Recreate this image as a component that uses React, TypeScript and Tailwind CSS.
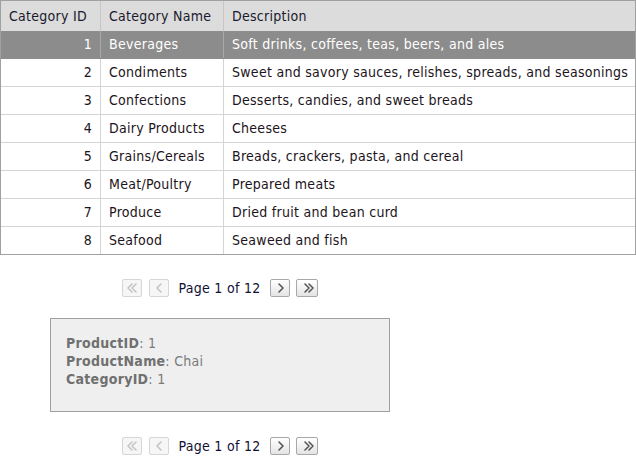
import React from "react";

const rows = [
  [1, "Beverages", "Soft drinks, coffees, teas, beers, and ales"],
  [2, "Condiments", "Sweet and savory sauces, relishes, spreads, and seasonings"],
  [3, "Confections", "Desserts, candies, and sweet breads"],
  [4, "Dairy Products", "Cheeses"],
  [5, "Grains/Cereals", "Breads, crackers, pasta, and cereal"],
  [6, "Meat/Poultry", "Prepared meats"],
  [7, "Produce", "Dried fruit and bean curd"],
  [8, "Seafood", "Seaweed and fish"],
] as const;

function PagerBtn({ kind, disabled }: { kind: "first" | "prev" | "next" | "last"; disabled?: boolean }) {
  const color = disabled ? "#c4c4c4" : "#555555";
  let d = "";
  if (kind === "first") d = "M9 5 L5 9 L9 13 M13 5 L9 9 L13 13";
  if (kind === "prev") d = "M11 5 L7 9 L11 13";
  if (kind === "next") d = "M8 5 L12 9 L8 13";
  if (kind === "last") d = "M7 5 L11 9 L7 13 M11 5 L15 9 L11 13";
  return (
    <div
      className={
        (kind === "last" ? "w-[22px] " : "w-[20px] ") +
        (disabled
          ? "h-[18px] rounded-[2px] border border-[#d6d6d6] bg-[#f6f6f6] flex items-center justify-center"
          : "h-[18px] rounded-[2px] border border-[#a8a8a8] bg-gradient-to-b from-[#ffffff] to-[#e4e4e4] flex items-center justify-center")
      }
    >
      <svg width="18" height="16" viewBox="0 1 18 16">
        <path d={d} fill="none" stroke={color} strokeWidth="1.6" strokeLinecap="round" strokeLinejoin="round" />
      </svg>
    </div>
  );
}

function Pager() {
  return (
    <div className="flex items-center justify-center h-[18px]">
      <div className="flex items-center">
        <PagerBtn kind="first" disabled />
        <div className="w-[7px]" />
        <PagerBtn kind="prev" disabled />
        <span className="mx-[10px] text-[14px] text-[#111133] leading-[18px]">Page 1 of 12</span>
        <PagerBtn kind="next" />
        <div className="w-[6px]" />
        <PagerBtn kind="last" />
      </div>
    </div>
  );
}

export default function App() {
  return (
    <div
      className="w-[636px] h-[456px] bg-white text-[14px] tracking-[0.28px]"
      style={{ fontFamily: '"DejaVu Sans Condensed", "DejaVu Sans", sans-serif' }}
    >
      <div className="border border-[#a0a0a0] w-[636px]">
        <div className="grid grid-cols-[100px_123px_1fr] h-[30px] bg-[#dcdcdc] text-[#1a1a2e]">
          <div className="px-2 flex items-center border-r border-[#c6c6c6]">Category ID</div>
          <div className="px-2 flex items-center border-r border-[#c6c6c6]">Category Name</div>
          <div className="px-2 flex items-center">Description</div>
        </div>
        {rows.map(([id, name, desc], i) => {
          const sel = i === 0;
          const last = i === rows.length - 1;
          return (
            <div
              key={id}
              className={
                "grid grid-cols-[100px_123px_1fr] " +
                (last ? "h-[27px] " : "h-[28px] border-b ") +
                (sel ? "bg-[#8c8c8c] text-white border-[#8c8c8c]" : "bg-white text-[#1c1420] border-[#d4d4d4]")
              }
            >
              <div className={"px-2 flex items-center justify-end border-r " + (sel ? "border-[#a8a8a8]" : "border-[#d4d4d4]")}>{id}</div>
              <div className={"px-2 flex items-center border-r " + (sel ? "border-[#a8a8a8]" : "border-[#d4d4d4]")}>{name}</div>
              <div className="px-2 flex items-center whitespace-nowrap">{desc}</div>
            </div>
          );
        })}
      </div>
      <div className="w-[440px]">
        <div className="pt-[24px]">
          <Pager />
        </div>
        <div className="mt-[21px] mx-[50px] h-[94px] border border-[#a0a0a0] bg-[#efefef] pl-[15px] pt-[15px] text-[14px] leading-[18px] text-[#7a7a7a]">
          <div><b className="text-[#707070]">ProductID</b>: 1</div>
          <div><b className="text-[#707070]">ProductName</b>: Chai</div>
          <div><b className="text-[#707070]">CategoryID</b>: 1</div>
        </div>
        <div className="mt-[25px]">
          <Pager />
        </div>
      </div>
    </div>
  );
}
